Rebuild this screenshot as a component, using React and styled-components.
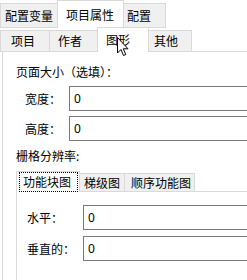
import React from "react";
import styled, { createGlobalStyle } from "styled-components";

const GlobalStyle = createGlobalStyle`
  html, body {
    margin: 0;
    padding: 0;
    background: #fff;
  }
  body {
    font-family: "Noto Sans CJK SC", "Noto Sans", sans-serif;
    font-size: 12px;
    color: #000;
    overflow: hidden;
  }
`;

const Window = styled.div`
  position: relative;
  width: 247px;
  height: 280px;
  overflow: hidden;
  background: #fff;
`;

const TabStrip = styled.div`
  display: flex;
  align-items: flex-end;
  height: ${(p) => p.h}px;
`;

const Tab = styled.div`
  box-sizing: border-box;
  width: ${(p) => p.w}px;
  height: ${(p) => (p.active ? p.h + 2 : p.h)}px;
  padding-left: ${(p) => p.pl}px;
  display: flex;
  align-items: center;
  background: ${(p) => (p.active ? "#fff" : "#f0f0f0")};
  border: 1px solid #d9d9d9;
  border-bottom: ${(p) => (p.active ? "none" : "1px solid #d9d9d9")};
  margin-left: ${(p) => (p.first ? 0 : -1)}px;
  position: relative;
  z-index: ${(p) => (p.active ? 2 : 1)};
  white-space: nowrap;
  line-height: 1;
`;

const Focus = styled.span`
  display: inline-block;
  padding: 3px 6px 3px 3px;
  margin-left: -3px;
  outline: 1px dotted #000;
  outline-offset: 0;
`;

const Page = styled.div`
  margin-left: ${(p) => p.left}px;
  border-left: 1px solid #d9d9d9;
  border-top: 1px solid #d9d9d9;
  margin-top: -1px;
  padding-left: ${(p) => p.pl}px;
  padding-top: ${(p) => p.pt}px;
  height: 400px;
`;

const Heading = styled.div`
  height: 16px;
  line-height: 16px;
  margin-top: ${(p) => p.mt || 0}px;
  white-space: nowrap;
`;

const Field = styled.div`
  display: flex;
  align-items: center;
  height: 25px;
  margin-top: ${(p) => p.mt}px;
  padding-left: ${(p) => p.pl}px;
`;

const Label = styled.div`
  width: ${(p) => p.w}px;
  flex: none;
  white-space: nowrap;
`;

const Input = styled.div`
  box-sizing: border-box;
  flex: none;
  width: 300px;
  height: 25px;
  border: 1px solid #7a7a7a;
  background: #fff;
  padding-left: 4px;
  display: flex;
  align-items: center;
  font-family: "Noto Sans", sans-serif;
  font-size: 12px;
`;

const Cursor = styled.svg`
  position: absolute;
  left: 117px;
  top: 37px;
  z-index: 5;
`;

export default function App() {
  return (
    <Window>
      <GlobalStyle />
      <TabStrip h={28}>
        <Tab first w={58} h={25} pl={4}>配置变量</Tab>
        <Tab active w={67} h={26} pl={8}>项目属性</Tab>
        <Tab w={43} h={25} pl={3}>配置</Tab>
      </TabStrip>
      <TabStrip h={24}>
        <Tab first w={50} h={22} pl={10}>项目</Tab>
        <Tab w={49} h={22} pl={8}>作者</Tab>
        <Tab active w={52} h={23} pl={8}>图形</Tab>
        <Tab w={44} h={22} pl={5}>其他</Tab>
      </TabStrip>
      <Page left={2} pl={13} pt={12}>
        <Heading>页面大小（选填）：</Heading>
        <Field mt={6} pl={9}>
          <Label w={44}>宽度：</Label>
          <Input>0</Input>
        </Field>
        <Field mt={5} pl={9}>
          <Label w={44}>高度：</Label>
          <Input>0</Input>
        </Field>
        <Heading mt={7}>栅格分辨率:</Heading>
        <TabStrip h={28}>
          <Tab first active w={64} h={19} pl={6}>
            <Focus>功能块图</Focus>
          </Tab>
          <Tab w={46} h={19} pl={4}>梯级图</Tab>
          <Tab w={71} h={19} pl={6}>顺序功能图</Tab>
        </TabStrip>
        <Page left={0} pl={10} pt={13}>
          <Field mt={0} pl={0}>
            <Label w={56}>水平：</Label>
            <Input>0</Input>
          </Field>
          <Field mt={6} pl={0}>
            <Label w={56}>垂直的：</Label>
            <Input>0</Input>
          </Field>
        </Page>
      </Page>
      <Cursor width="13" height="20" viewBox="0 0 13 20">
        <path
          d="M0.5 0.5 L0.5 16 L4 12.5 L6.5 18.5 L8.8 17.5 L6.3 11.8 L11 11.8 Z"
          fill="#fff"
          stroke="#000"
          strokeWidth="1"
          strokeLinejoin="miter"
        />
      </Cursor>
    </Window>
  );
}
